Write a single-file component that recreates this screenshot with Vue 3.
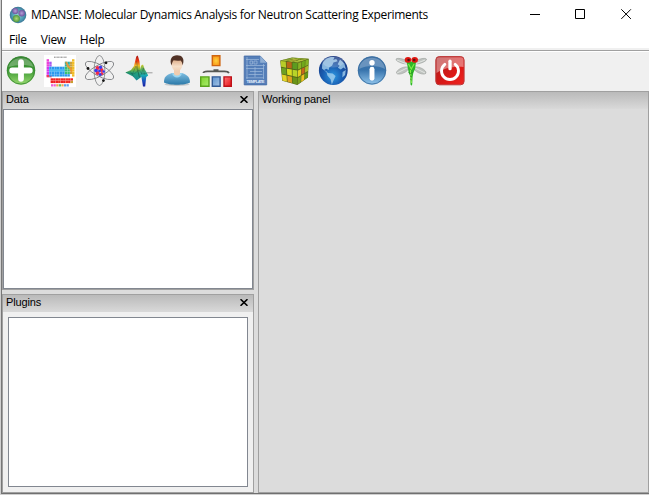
<script setup>
const menus = ['File', 'View', 'Help']

// Periodic table blocks: [x, y, columns, rows, colour]
const blocks = [
  [2.6, 4.2, 1, 3, '#ec40d8'],
  [2.6, 11.7, 1, 4, '#d038f0'],
  [5.2, 6.7, 1, 2, '#a858f0'],
  [2.6, 20, 2, 1, '#f03c5c'],
  [5.2, 11.7, 6, 4, '#2a98ee'],
  [5.2, 14.2, 6, 1, '#48b8f4'],
  [20.8, 6.7, 2, 2, '#28b0a8'],
  [20.8, 11.7, 2, 3, '#3cc070'],
  [20.8, 19.2, 2, 1, '#2c98e8'],
  [26, 6.7, 1, 5, '#c8a040'],
  [28, 4.2, 1, 7, '#f0bc28'],
]
const cells = blocks.flatMap(([x, y, cols, rows, fill]) => {
  const out = []
  for (let r = 0; r < rows; r++) {
    for (let c = 0; c < cols; c++) out.push({ x: x + c * 2.6, y: y + r * 2.5, fill })
  }
  return out
})
const lanthanides = ['#f02020', '#f02020', '#f02020', '#e83020', '#f02020', '#f02020', '#f03020', '#f02020', '#f02020']
const superheavy = ['#e838c8', '#e838c8', '#f09020', '#38b838', '#f09020', '#3888e8', '#3888e8']

// Puzzle cube: every visible face is a quad divided into 3×3 tiles
const faces = [
  { quad: [[2.2, 5.4], [20, 7.6], [19.4, 30], [4.2, 25.8]], fills: ['#b8cc28', '#b86818', '#5c9c20', '#6ca024', '#d8dc20', '#b8d428', '#e4d428', '#e0a020', '#6a9418'] },
  { quad: [[20, 7.6], [30.8, 3.8], [30, 22.6], [19.4, 30]], fills: ['#88b424', '#70a81c', '#84b424', '#e4cc20', '#c8641c', '#a8bc28', '#7ca41c', '#f0c020', '#649818'] },
  { quad: [[2.2, 5.4], [14, 2.6], [30.8, 3.8], [20, 7.6]], fills: ['#a4bc38', '#88a830', '#a0b83c', '#c8c83c', '#dcd444', '#94b030', '#a8bc38', '#b4c43c', '#98b030'] },
]
const at = ([a, b, c, d], u, v) =>
  [0, 1].map(k => ((a[k] * (1 - u) + b[k] * u) * (1 - v) + (d[k] * (1 - u) + c[k] * u) * v).toFixed(2)).join(',')
const tiles = faces.flatMap(({ quad, fills }) =>
  fills.map((fill, i) => {
    const u = (i % 3) / 3
    const v = Math.floor(i / 3) / 3
    const g = 0.022
    const s = 1 / 3 - g
    return { fill, points: [at(quad, u + g, v + g), at(quad, u + s, v + g), at(quad, u + s, v + s), at(quad, u + g, v + s)].join(' ') }
  })
)
</script>

<template>
  <div class="window">
    <header class="titlebar">
      <svg class="logo" viewBox="0 0 18 18">
        <defs>
          <radialGradient id="lg"><stop offset="0" stop-color="#93d0d0" /><stop offset=".7" stop-color="#4d9cb4" /><stop offset="1" stop-color="#3c7494" /></radialGradient>
          <radialGradient id="lp"><stop offset="0" stop-color="#b6a0d8" /><stop offset="1" stop-color="#70559f" /></radialGradient>
          <radialGradient id="lgr"><stop offset="0" stop-color="#b1da75" /><stop offset="1" stop-color="#4e9640" /></radialGradient>
        </defs>
        <circle cx="9" cy="9" r="8.3" fill="url(#lg)" />
        <circle cx="6.3" cy="5" r="3.1" fill="url(#lp)" />
        <circle cx="12.7" cy="7.2" r="3.2" fill="url(#lp)" />
        <circle cx="7.4" cy="12.6" r="3.6" fill="url(#lgr)" />
      </svg>
      <h1>MDANSE: Molecular Dynamics Analysis for Neutron Scattering Experiments</h1>
      <div class="controls">
        <svg viewBox="0 0 11 11"><path d="M1 5.5h10" stroke="#000" /></svg>
        <svg viewBox="0 0 11 11"><path d="M.5 .5h9v9h-9z" fill="none" stroke="#000" /></svg>
        <svg viewBox="0 0 11 11"><path d="M.3 .3l9.6 9.6M9.9 .3L.3 9.9" stroke="#000" /></svg>
      </div>
    </header>
    <nav class="menubar"><span v-for="m in menus" :key="m">{{ m }}</span></nav>

    <div class="toolbar">
      <!-- Load -->
      <svg viewBox="0 0 32 32">
        <defs><linearGradient id="plus" x2="0" y2="1"><stop offset="0" stop-color="#2c7c27" /><stop offset=".5" stop-color="#3f9b36" /><stop offset="1" stop-color="#9ada70" /></linearGradient></defs>
        <circle cx="16" cy="15.5" r="14.2" fill="url(#plus)" />
        <circle cx="16" cy="15.5" r="13.6" fill="none" stroke="#3c8b38" stroke-width=".9" />
        <path d="M3.5 12C7 0 25 0 28.5 12C21 9 11 10 3.5 12" fill="#fff" opacity=".28" />
        <path d="M16 7.2v16.6M7.2 15.5h17.6" stroke="#fff" stroke-width="5.8" stroke-linecap="round" />
      </svg>
      <!-- Periodic table -->
      <svg viewBox="0 0 32 32">
        <path fill="#fff" d="M0 0h32v32H0z" />
        <path d="M10 2.2h13" stroke="#555" stroke-width="1" stroke-dasharray="1 .4" opacity=".75" />
        <rect v-for="(c, i) in cells" :key="i" :x="c.x" :y="c.y" width="2.45" height="2.35" :fill="c.fill" />
        <path d="M21 6.7l2 5 3 3 2 4.5v-5l-3-4-2-3.5z" fill="#f3942a" opacity=".85" />
        <rect v-for="(c, i) in lanthanides" :key="'l' + i" :x="6.6 + i * 2.5" y="23.3" width="2.4" height="2.3" :fill="c" />
        <rect v-for="(c, i) in lanthanides" :key="'a' + i" :x="6.6 + i * 2.5" y="25.8" width="2.4" height="2.3" :fill="i > 7 ? '#c8a030' : c" />
        <rect v-for="(c, i) in superheavy" :key="'s' + i" :x="7 + i * 2.6" y="29.2" width="2.2" height="2.3" :fill="c" opacity=".8" />
      </svg>
      <!-- Atom -->
      <svg viewBox="0 0 32 32">
        <g fill="none" stroke="#74777a" stroke-width=".75">
          <ellipse cx="16.5" cy="15.5" rx="5.4" ry="15" />
          <ellipse cx="16.5" cy="15.5" rx="5.5" ry="16" transform="rotate(61 16.5 15.5)" />
          <ellipse cx="16.5" cy="15.5" rx="5.5" ry="16" transform="rotate(-61 16.5 15.5)" />
        </g>
        <g fill="#f12b4b"><circle cx="14.5" cy="13" r="2" /><circle cx="18.5" cy="15" r="2" /><circle cx="14.5" cy="18" r="2" /><circle cx="18.9" cy="18.6" r="1.6" /></g>
        <g fill="#3739ed"><circle cx="17.5" cy="12.3" r="1.7" /><circle cx="13" cy="15.5" r="1.8" /><circle cx="16.5" cy="16" r="1.4" /><circle cx="17.1" cy="19.5" r="1.5" /><circle cx="20.7" cy="16.5" r="1.3" /></g>
        <g fill="#151515"><circle cx="23" cy="7.8" r="1.4" /><circle cx="5" cy="13.5" r="1.4" /><circle cx="20.4" cy="25.6" r="1.4" /></g>
      </svg>
      <!-- Surface plot -->
      <svg viewBox="0 0 32 32">
        <defs>
          <linearGradient id="surf" x2="0" y2="1"><stop offset="0" stop-color="#a51515" /><stop offset=".22" stop-color="#ee3a12" /><stop offset=".4" stop-color="#efb923" /><stop offset=".55" stop-color="#83b53b" /><stop offset=".7" stop-color="#20a07c" /><stop offset="1" stop-color="#188c98" /></linearGradient>
          <linearGradient id="surf2" x2="0" y2="1"><stop offset="0" stop-color="#d3c823" /><stop offset=".25" stop-color="#4dad66" /><stop offset=".5" stop-color="#17a8b2" /><stop offset=".75" stop-color="#1c50c0" /><stop offset="1" stop-color="#1a20a0" /></linearGradient>
        </defs>
        <path d="M3.3 17.5L9 15 12 11 14.3 1.5 15.8 .6 17.4 6 18.4 14 21 20 18 23 14.5 25.5 11 21.5z" fill="url(#surf)" />
        <path d="M17.4 18l1.8-7.5 1.8-1 1.8 5 1.6 2.5 1.8 3.5-2 1.5-1 9.5H21L19.4 22z" fill="url(#surf2)" />
        <path d="M25 17.8h5.5" stroke="#888" stroke-width=".8" />
        <path d="M4 17.5l8 1.5 5-4 3 4 5-1M8 16l4 6M10 20l4-9 4 12M14.5 6l2.5 16M19 20l2.4-7 1 7" fill="none" stroke="#17463e" stroke-width=".5" opacity=".6" />
      </svg>
      <!-- User -->
      <svg viewBox="0 0 32 32">
        <defs>
          <linearGradient id="shirt" x2="0" y2="1"><stop offset="0" stop-color="#7dbde1" /><stop offset="1" stop-color="#2b79a8" /></linearGradient>
          <linearGradient id="skin" x2="0" y2="1"><stop offset="0" stop-color="#d79e76" /><stop offset=".65" stop-color="#f6dfc9" /><stop offset="1" stop-color="#f0ceb2" /></linearGradient>
        </defs>
        <ellipse cx="16" cy="29.5" rx="12.5" ry="1.5" fill="#c4c8ca" />
        <path d="M3 27.5C3 22 5 20 11 18h10c6 2 8 5 8 9.5-5 3-21 3-26 0z" fill="url(#shirt)" />
        <path d="M11 18.2h10c-.6 3-3 4.2-5 4.2s-4.4-1.2-5-4.2z" fill="#99d6f2" />
        <path d="M13 14h6v5c-1 2-5 2-6 0z" fill="#f0cdb0" />
        <path d="M10.5 6.5C10.4 1.5 21.6 1.5 21.5 6.5c.4 5.5-1.5 9.5-5.5 9.5s-5.9-4-5.5-9.5z" fill="url(#skin)" />
        <path d="M10.5 10.5C8 4 11 .4 16 .3c5 0 8 3.2 5.7 10C21 8.5 21.4 7 19.6 5.5c-3.1.7-5.3.1-7-.2-1.5 1.6-1.4 3-2.1 5.2z" fill="#513226" />
      </svg>
      <!-- Hierarchy -->
      <svg viewBox="0 0 32 32">
        <defs>
          <radialGradient id="or"><stop offset="0" stop-color="#ffd340" /><stop offset="1" stop-color="#f99b19" /></radialGradient>
          <linearGradient id="gr" x2="1" y2="1"><stop offset="0" stop-color="#7ed02c" /><stop offset="1" stop-color="#a8ee6d" /></linearGradient>
          <linearGradient id="bl" x2="1" y2="1"><stop offset="0" stop-color="#5a91cd" /><stop offset="1" stop-color="#a7c5e6" /></linearGradient>
          <linearGradient id="re" x2="1" y2="1"><stop offset="0" stop-color="#ff7577" /><stop offset="1" stop-color="#e51217" /></linearGradient>
        </defs>
        <path d="M12.3.8h7.6v9.8h-7.6z" fill="url(#or)" stroke="#cf6510" stroke-width="1.4" />
        <path d="M3.4 18.1c0-1.5 1.5-1.8 4-1.8h17c3 0 4 .6 4.5 1.8M13.5 15h5" fill="none" stroke="#555753" stroke-width="1.7" />
        <path d="M.7 21.9H9v9.3H.7z" fill="url(#gr)" stroke="#58a21d" stroke-width="1.4" />
        <path d="M12.3 21.9h7.8v9.3h-7.8z" fill="url(#bl)" stroke="#315994" stroke-width="1.4" />
        <path d="M24 21.9h7.3v9.3H24z" fill="url(#re)" stroke="#bd1118" stroke-width="1.4" />
      </svg>
      <!-- Template -->
      <svg viewBox="0 0 32 32">
        <path d="M5.2 1h16L27.7 7.7v22.2H5.2z" fill="#557fb9" stroke="#456ca6" stroke-width=".8" />
        <path d="M21.2 1v6.7h6.5z" fill="#8faed4" />
        <g fill="none" stroke="#a0bbdd" stroke-width=".7"><path d="M8 2v22M7 4.5h13M7 10.5h19M7 13.5h18M7 22.8h18M24.5 9v15M16 12v10M11 16.5h12M9.5 19.5h14" /><path d="M11 6h2.6v3H11zM15 6h3v3h-3z" /></g>
        <text x="16.5" y="28.3" text-anchor="middle" textLength="18" class="template-label">TEMPLATE</text>
      </svg>
      <!-- Cube -->
      <svg viewBox="0 0 32 32">
        <path d="M2.2 5.4L14 2.6l16.8 1.2-.8 18.8L19.4 30 4.2 25.8z" fill="#566618" />
        <polygon v-for="(t, i) in tiles" :key="i" :points="t.points" :fill="t.fill" />
      </svg>
      <!-- Globe -->
      <svg viewBox="0 0 32 32">
        <defs><radialGradient id="world" cx=".48" cy=".7" r=".7"><stop offset="0" stop-color="#2d99e2" /><stop offset=".5" stop-color="#195cb0" /><stop offset="1" stop-color="#19357e" /></radialGradient></defs>
        <circle cx="16.3" cy="15.5" r="14.4" fill="url(#world)" />
        <path d="M5.2 9C8 3 13 1.4 17.5 2.2l-1.3 2.7 3-.9 1.5 2.2-4.3 1.2-1.2 3-3 2-.5 2.6-2.5-1.3-2 1.2 2.5 1.7 1.2 1.4 4.7.6 3 2.5-2.3 5-1.5 3.3-1.2-5.1-3.2-3.8-.8-3.2L5 13.4zM23 4.5l4.4 4 1.5 6-2.4-2-2.7 1.9-3-1.6 1.9-2-2-1.6zM25.6 17l3.2-2-.7 5-2.8 2.4z" fill="#a4d0ee" opacity=".8" />
        <ellipse cx="16" cy="7" rx="10.6" ry="5.5" fill="#fff" opacity=".2" />
      </svg>
      <!-- About -->
      <svg viewBox="0 0 32 32">
        <defs><linearGradient id="info" x2="0" y2="1"><stop offset="0" stop-color="#3f72a8" /><stop offset=".48" stop-color="#3773ac" /><stop offset="1" stop-color="#91c6ed" /></linearGradient></defs>
        <circle cx="16" cy="15.5" r="14.2" fill="url(#info)" />
        <circle cx="16" cy="15.5" r="13.6" fill="none" stroke="#3d6f9f" stroke-width=".9" />
        <path d="M3 14C5-1 27-1 29 14 22 10 10 10 3 14" fill="#fff" opacity=".24" />
        <circle cx="16" cy="7.7" r="2.7" fill="#fff" /><path d="M16 14.2v9" stroke="#fff" stroke-width="4.9" stroke-linecap="round" />
      </svg>
      <!-- Dragonfly -->
      <svg viewBox="0 0 32 32">
        <g fill="#bfc3c0" stroke="#969a97" stroke-width=".5">
          <ellipse cx="7.5" cy="6.2" rx="6.8" ry="2.1" transform="rotate(17 7.5 6.2)" /><ellipse cx="25" cy="6.2" rx="6.8" ry="2.1" transform="rotate(-17 25 6.2)" />
          <ellipse cx="7.5" cy="15.5" rx="6.5" ry="2.7" transform="rotate(-24 7.5 15.5)" /><ellipse cx="25" cy="15.5" rx="6.5" ry="2.7" transform="rotate(24 25 15.5)" />
        </g>
        <path d="M2 5l10 4M30 5L20 9M2 18l10-5M30 18l-10-5" stroke="#e2e5e2" stroke-width="1" />
        <path d="M11.6 6.5h9.4l-.8 7-1.9 4.5-.7 4-.4 7.6-.8 1.2-.9-1.2-.2-8-1.5-3.7z" fill="#2eb629" />
        <path d="M13.5 9l2.8 5 2.8-5M15.4 15l1 13" fill="none" stroke="#83ee48" stroke-width="1.1" />
        <path d="M13.5 17l2 2 2-2M15 21l2 1M15.2 24l1.5 1" stroke="#176d15" fill="none" stroke-width=".6" />
        <ellipse cx="13" cy="4.8" rx="3.3" ry="2.9" fill="#e01711" /><ellipse cx="19.7" cy="4.8" rx="3.3" ry="2.9" fill="#e01711" />
        <circle cx="13.6" cy="5" r="1.3" fill="#591313" /><circle cx="19.2" cy="5" r="1.3" fill="#591313" />
      </svg>
      <!-- Quit -->
      <svg viewBox="0 0 32 32">
        <defs><linearGradient id="quit" x2="1" y2="1"><stop offset="0" stop-color="#a71c1c" /><stop offset=".65" stop-color="#df1917" /><stop offset="1" stop-color="#ed2522" /></linearGradient></defs>
        <rect x="1.8" y="1.6" width="28.3" height="28.2" rx="3.5" fill="url(#quit)" stroke="#bd3939" />
        <path d="M2.5 5c0-2 1-2.8 3-2.8h21c2 0 3 1 3 3V12C20 11 10 13 2.5 18z" fill="#fff" opacity=".4" />
        <path d="M10.8 9.3a8.5 8.5 0 1 0 10.4 0" fill="none" stroke="#fff" stroke-width="2.9" stroke-linecap="round" />
        <path d="M16 6.2v7.5" stroke="#fff" stroke-width="3.3" stroke-linecap="round" />
      </svg>
    </div>

    <main class="workspace">
      <aside class="sidebar">
        <section class="pane data">
          <div class="caption"><span>Data</span><svg class="close" viewBox="0 0 8 7"><path d="M.5 .2L7.5 6.8M7.5 .2L.5 6.8" /></svg></div>
          <div class="tree"></div>
        </section>
        <section class="pane plugins">
          <div class="caption"><span>Plugins</span><svg class="close" viewBox="0 0 8 7"><path d="M.5 .2L7.5 6.8M7.5 .2L.5 6.8" /></svg></div>
          <div class="plugin-body"><div class="tree"></div></div>
        </section>
      </aside>
      <section class="pane working"><div class="caption"><span>Working panel</span></div></section>
    </main>
  </div>
</template>

<style>
body { margin: 0; overflow: hidden; background: #d0d0d0; }
</style>

<style scoped>
* { box-sizing: border-box; }
.window { width: 648px; height: 494px; margin-left: 1px; border-left: 1px solid #777; border-bottom: 1px solid #707070; background: #fff; display: flex; flex-direction: column; font-family: "Open Sans", sans-serif; color: #000; }
.titlebar { height: 29px; display: flex; align-items: center; flex: none; }
.logo { width: 18px; height: 18px; margin-left: 7px; }
h1 { margin: 1px 0 0 4px; font: 12px/18px "Open Sans", sans-serif; letter-spacing: -.31px; white-space: nowrap; }
.controls { margin-left: auto; display: flex; gap: 35px; padding-right: 17px; }
.controls svg { width: 11px; height: 11px; display: block; }
.menubar { height: 21px; flex: none; border-bottom: 2px solid #f0f0f0; display: flex; gap: 14px; padding: 2px 0 0 7px; font-size: 12px; line-height: 18px; letter-spacing: -.3px; }
.toolbar { height: 41px; flex: none; border-top: 1px solid #a0a0a0; background: #f0f0f0; box-shadow: inset 0 1px #fff; padding: 4px 0 0 3px; display: flex; gap: 7px; }
.toolbar svg { width: 32px; height: 32px; flex: none; }
.template-label { font: bold 4px "Liberation Sans", sans-serif; fill: #e0ebfa; }
.workspace { flex: 1; min-height: 0; display: flex; gap: 4px; background: #dcdcdc; }
.sidebar { width: 252px; flex: none; display: flex; flex-direction: column; gap: 4px; }
.pane { border: 1px solid #a0a0a0; display: flex; flex-direction: column; }
.data { height: 199px; flex: none; }
.plugins { flex: 1; min-height: 0; }
.working { flex: 1; background: #dcdcdc; }
.caption { height: 17px; flex: none; padding: 0 5px 0 3px; background: linear-gradient(#bababa, #d9d9d9); font: 11px/15px "Liberation Sans", sans-serif; letter-spacing: -.14px; display: flex; justify-content: space-between; }
.close { width: 8px; height: 7px; margin-top: 4px; stroke: #000; stroke-width: 1.6; fill: none; }
.tree { flex: 1; border: 1px solid #828790; background: #fff; }
.plugin-body { flex: 1; display: flex; background: #f0f0f0; padding: 5px; }
</style>
